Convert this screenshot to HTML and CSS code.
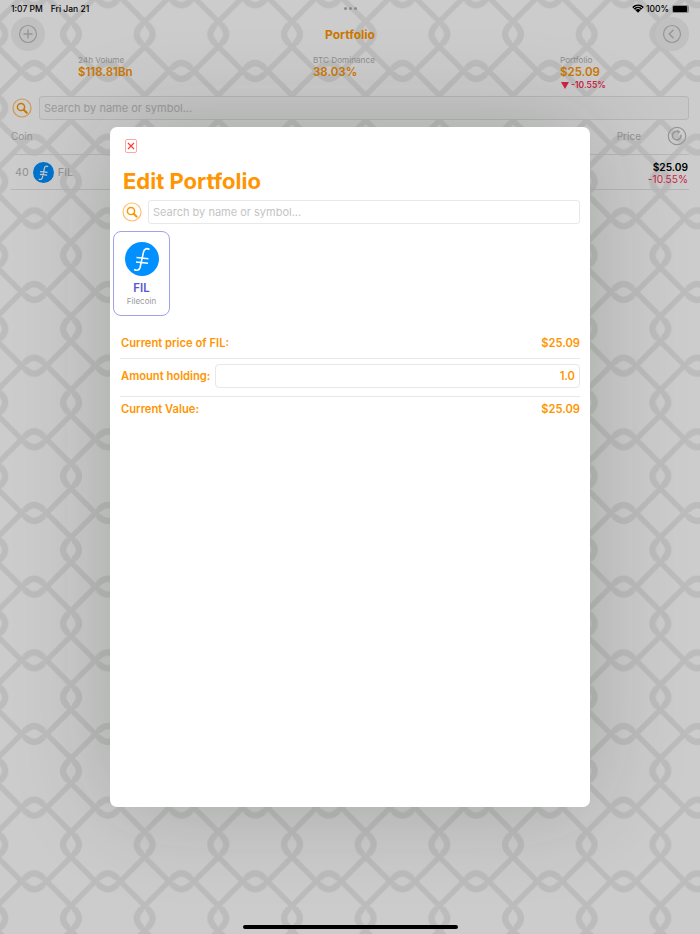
FILE: index.html
```html
<!DOCTYPE html>
<html lang="en">
<head>
    <meta charset="UTF-8">
    <meta name="viewport" content="width=device-width, initial-scale=1.0">
    <title>Portfolio</title>
    <link rel="stylesheet" href="styles.css">
</head>
<body>
<div class="app">
    <!-- chain link wallpaper -->
    <svg class="wallpaper" width="700" height="934" aria-hidden="true">
        <defs>
            <g id="knot" fill="none" stroke="#ebebeb" stroke-width="5">
                <path d="M-24.3 -36.83L3 -9.500M24.3 -36.83L-3 -9.500M-24.3 36.83L3 9.500M24.3 36.83L-3 9.500"/>
                <path d="M3 -9.500C9.500 -3 9.500 3 3 9.500M-3 -9.500C-9.500 -3 -9.500 3 -3 9.500" stroke-width="6.300"/>
            </g>
            <pattern id="chain" width="73.67" height="73.67" patternUnits="userSpaceOnUse" patternTransform="translate(-2.67 -2.67)">
                <use href="#knot" transform="translate(0 36.83)"/>
                <use href="#knot" transform="translate(73.67 36.83)"/>
                <use href="#knot" transform="translate(36.83 0) rotate(90)"/>
                <use href="#knot" transform="translate(36.83 73.67) rotate(90)"/>
            </pattern>
        </defs>
        <rect width="700" height="934" fill="url(#chain)"/>
    </svg>

    <div class="status-bar">
        <div class="status-left"><span>1:07 PM</span><span>Fri Jan 21</span></div>
        <div class="status-dots"><i></i><i></i><i></i></div>
        <div class="status-right">
            <svg width="12" height="9" viewBox="0 0 12 9"><path d="M6 8.800L0.200 3a8.200 8.200 0 0 1 11.600 0z" fill="#000"/><path d="M2 3.900a5.700 5.700 0 0 1 8 0M3.600 5.400a3.400 3.400 0 0 1 4.800 0" fill="none" stroke="#ccc" stroke-width=".9"/></svg>
            <span>100%</span>
            <span class="battery"><i></i></span>
        </div>
    </div>

    <div class="page">
        <header class="top-bar">
            <button class="round-btn" aria-label="Add">
                <svg width="20" height="20" viewBox="0 0 20 20" fill="none" stroke="#bcbcbc" stroke-width="1.200"><circle cx="10" cy="10" r="8.500"/><path d="M10 5.500v9M5.500 10h9" stroke-width="1.400"/></svg>
            </button>
            <div class="top-title">Portfolio</div>
            <button class="round-btn" aria-label="Back">
                <svg width="20" height="20" viewBox="0 0 20 20" fill="none" stroke="#bcbcbc" stroke-width="1.200"><circle cx="10" cy="10" r="8.500"/><path d="M11.500 5.800L7.300 10l4.200 4.200" stroke-width="1.400"/></svg>
            </button>
        </header>

        <section class="stats">
            <div class="stat">
                <div class="stat-label">24h Volume</div>
                <div class="stat-value">$118.81Bn</div>
            </div>
            <div class="stat">
                <div class="stat-label">BTC Dominance</div>
                <div class="stat-value">38.03%</div>
            </div>
            <div class="stat">
                <div class="stat-label">Portfolio</div>
                <div class="stat-value">$25.09</div>
                <div class="stat-change"><span class="down-arrow"></span>-10.55%</div>
            </div>
        </section>

        <div class="search-row">
            <svg class="search-icon" width="20" height="20" viewBox="0 0 20 20" fill="none" stroke="#ff9500"><circle cx="10" cy="10" r="9" stroke-opacity=".6" stroke-width="1.200"/><circle cx="9" cy="9" r="3.600" stroke-width="1.500"/><path d="M11.700 11.700l3 3" stroke-width="2" stroke-linecap="round"/></svg>
            <div class="search-box">Search by name or symbol...</div>
        </div>

        <div class="list-head">
            <span>Coin</span>
            <span class="price-head">Price</span>
            <svg width="20" height="20" viewBox="0 0 20 20" fill="none" stroke="#bcbcbc"><circle cx="10" cy="10" r="8.700" stroke-width="1.200"/><path d="M13.900 8.600a4.300 4.300 0 1 1-2.400-2.900" stroke-width="1.500"/><path d="M10.200 3.600l3 2.200-2.400 2.600z" fill="#bcbcbc" stroke="none"/></svg>
        </div>

        <div class="coin-row">
            <span class="rank">40</span>
            <svg class="fil-logo" width="21" height="21" viewBox="0 0 34 34"><circle cx="17" cy="17" r="17" fill="#0090ff"/><path d="M24.500 7.500c-3-1.800-5.300-.6-6 2.500l-3.400 15.500c-.8 2.800-3 3.500-6 2M11.500 15.500l12 1.200M11 20l12 1.200" fill="none" stroke="#fff" stroke-width="1.900"/></svg>
            <span class="coin-symbol">FIL</span>
            <div class="coin-price">
                <div class="coin-value">$25.09</div>
                <div class="coin-change">-10.55%</div>
            </div>
        </div>
    </div>

    <div class="scrim"></div>

    <!-- edit portfolio sheet -->
    <div class="sheet">
        <button class="close-btn" aria-label="Close">
            <svg width="8" height="8" viewBox="0 0 8 8"><path d="M1 1l6 6M7 1L1 7" stroke="#ff3b30" stroke-width="1.200"/></svg>
        </button>
        <h1 class="sheet-title">Edit Portfolio</h1>

        <div class="sheet-search">
            <svg width="20" height="20" viewBox="0 0 20 20" fill="none" stroke="#ff9500"><circle cx="10" cy="10" r="9" stroke-opacity=".6" stroke-width="1.200"/><circle cx="9" cy="9" r="3.600" stroke-width="1.500"/><path d="M11.700 11.700l3 3" stroke-width="2" stroke-linecap="round"/></svg>
            <div class="sheet-search-box">Search by name or symbol...</div>
        </div>

        <div class="coin-card">
            <svg width="34" height="34" viewBox="0 0 34 34"><circle cx="17" cy="17" r="17" fill="#0090ff"/><path d="M24.500 7.500c-3-1.800-5.300-.6-6 2.500l-3.400 15.500c-.8 2.800-3 3.500-6 2M11.500 15.500l12 1.200M11 20l12 1.200" fill="none" stroke="#fff" stroke-width="1.600"/></svg>
            <div class="card-symbol">FIL</div>
            <div class="card-name">Filecoin</div>
        </div>

        <div class="form">
            <div class="form-row first-row">
                <span>Current price of FIL:</span>
                <span>$25.09</span>
            </div>
            <div class="form-row input-row">
                <span>Amount holding:</span>
                <div class="amount-input">1.0</div>
            </div>
            <div class="form-row last-row">
                <span>Current Value:</span>
                <span>$25.09</span>
            </div>
        </div>
    </div>

    <div class="home-indicator"></div>
</div>
</body>
</html>
```

FILE: styles.css
```css
* {
    box-sizing: border-box;
}
body {
    margin: 0;
    font-family: Inter, "Liberation Sans", sans-serif;
    background-color: #fff;
}
button {
    padding: 0;
    border: none;
    background: none;
    font: inherit;
}
.app {
    position: relative;
    width: 700px;
    height: 934px;
    overflow: hidden;
    background-color: #fff;
}
.wallpaper {
    position: absolute;
    top: 0;
    left: 0;
}

/* status bar sits above the scrim */
.status-bar {
    position: relative;
    z-index: 3;
    display: flex;
    align-items: center;
    justify-content: space-between;
    height: 17px;
    padding: 0 11px;
    font-size: 8.500px;
    font-weight: 500;
    color: #000;
}
.status-left, .status-right {
    display: flex;
    align-items: center;
    width: 120px;
}
.status-left {
    gap: 8px;
}
.status-right {
    justify-content: flex-end;
    gap: 2px;
}
.status-dots {
    display: flex;
    gap: 2px;
}
.status-dots i {
    width: 3px;
    height: 3px;
    border-radius: 50%;
    background-color: #8a8a8a;
}
.battery {
    display: block;
    width: 17px;
    height: 8px;
    margin-left: 1px;
    padding: 1px;
    border-radius: 2px;
    background-color: #8a8a8a;
}
.battery i {
    display: block;
    width: 14px;
    height: 6px;
    border-radius: 1px;
    background-color: #000;
}

.page {
    position: relative;
}
.top-bar {
    display: flex;
    align-items: center;
    justify-content: space-between;
    height: 34px;
    padding: 0 11px;
}
.round-btn {
    display: flex;
    align-items: center;
    justify-content: center;
    width: 34px;
    height: 34px;
    border-radius: 50%;
    background-color: #f0f0f0;
}
.top-title {
    font-size: 12px;
    font-weight: 700;
    color: #ff9500;
}
.stats {
    display: grid;
    grid-template-columns: 235px 247px auto;
    height: 45px;
    padding: 4px 0 0 78px;
}
.stat-label {
    font-size: 8.200px;
    line-height: 11px;
    color: #b4b4b4;
}
.stat-value {
    font-size: 11.500px;
    line-height: 13px;
    font-weight: 600;
    color: #ff9500;
}
.stat-change {
    display: flex;
    align-items: center;
    gap: 2px;
    font-size: 8.500px;
    line-height: 13px;
    font-weight: 600;
    color: #ff2d55;
}
.down-arrow {
    width: 0;
    height: 0;
    margin-left: 1px;
    border-top: 7px solid #ff2d55;
    border-left: 4px solid transparent;
    border-right: 4px solid transparent;
}
.search-row {
    display: flex;
    align-items: center;
    gap: 7px;
    height: 24px;
    padding: 0 11px 0 12px;
}
.search-box {
    flex: 1;
    height: 24px;
    padding-left: 4px;
    line-height: 22px;
    font-size: 11px;
    color: #c4c4c4;
    background-color: #fafafa;
    border: 1px solid #e4e4e4;
    border-radius: 3px;
}
.list-head {
    display: flex;
    align-items: center;
    gap: 26px;
    height: 34px;
    padding: 0 13px 2px 11px;
    font-size: 10px;
    color: #b8b8b8;
}
.price-head {
    margin-left: auto;
}
.coin-row {
    display: flex;
    align-items: center;
    height: 36px;
    margin: 0 11px;
    padding: 0 1px 0 4px;
    border-top: 1px solid #e4e4e4;
    border-bottom: 1px solid #e4e4e4;
    font-size: 10.800px;
    color: #b8b8b8;
}
.fil-logo {
    margin: 0 4px 0 4px;
}
.coin-price {
    margin: 2px 0 0 auto;
    text-align: right;
    font-size: 10.200px;
    line-height: 12px;
}
.coin-value {
    font-weight: 600;
    color: #000;
}
.coin-change {
    color: #ff2d55;
}

.scrim {
    position: absolute;
    top: 0;
    left: 0;
    right: 0;
    bottom: 0;
    z-index: 1;
    background-color: rgba(0, 0, 0, 0.2);
}
.sheet {
    position: absolute;
    top: 127px;
    left: 110px;
    z-index: 2;
    width: 480px;
    height: 680px;
    padding: 12px 10px 0 3px;
    background-color: #fff;
    border-radius: 7px;
    box-shadow: 0 0 100px rgba(10, 25, 0, 0.2);
}
.close-btn {
    display: flex;
    align-items: center;
    justify-content: center;
    width: 12px;
    height: 14px;
    margin-left: 12px;
    border: 1px solid #ffa6a6;
    border-radius: 2px;
}
.sheet-title {
    margin: 14px 0 0 10px;
    font-size: 22px;
    line-height: 28px;
    font-weight: 700;
    color: #ff9500;
}
.sheet-search {
    display: flex;
    align-items: center;
    gap: 6px;
    margin: 5px 0 0 9px;
}
.sheet-search-box {
    flex: 1;
    height: 24px;
    padding-left: 4px;
    line-height: 22px;
    font-size: 11px;
    color: #c4c4c4;
    border: 1px solid #e8e8e8;
    border-radius: 3px;
}
.coin-card {
    display: flex;
    flex-direction: column;
    align-items: center;
    width: 57px;
    height: 85px;
    margin-top: 7px;
    padding-top: 10px;
    border: 1.500px solid #a3a1ea;
    border-radius: 8px;
}
.card-symbol {
    margin-top: 4px;
    font-size: 11.500px;
    line-height: 16px;
    font-weight: 600;
    color: #5856d6;
}
.card-name {
    font-size: 8px;
    line-height: 11px;
    color: #9a9a9a;
}
.form {
    margin: 14px 0 0 7px;
    font-size: 11.200px;
    font-weight: 600;
    color: #ff9500;
}
.form-row {
    display: flex;
    align-items: center;
    justify-content: space-between;
    padding-left: 1px;
}
.first-row {
    height: 29px;
    padding-bottom: 3px;
    border-bottom: 1px solid #e8e8e8;
}
.input-row {
    height: 38px;
    gap: 5px;
    padding-bottom: 3px;
    border-bottom: 1px solid #e8e8e8;
}
.last-row {
    height: 24px;
}
.amount-input {
    flex: 1;
    height: 24px;
    padding-right: 4px;
    line-height: 22px;
    text-align: right;
    border: 1px solid #e8e8e8;
    border-radius: 4px;
}
.home-indicator {
    position: absolute;
    left: 243px;
    bottom: 5px;
    z-index: 3;
    width: 215px;
    height: 4px;
    border-radius: 2px;
    background-color: #000;
}
```
